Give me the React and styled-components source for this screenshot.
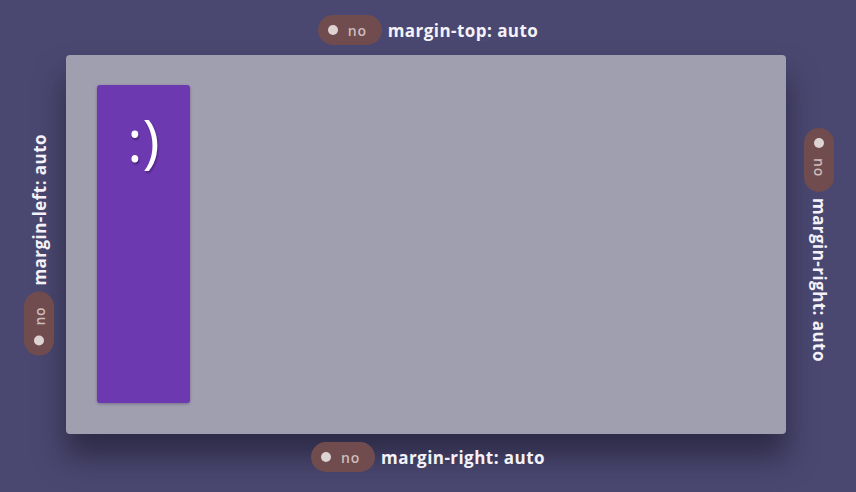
import React from "react";
import styled, { createGlobalStyle } from "styled-components";

const Global = createGlobalStyle`
  html, body { margin: 0; padding: 0; }
  body {
    background: #4a4870;
    font-family: "Open Sans", "Noto Sans", sans-serif;
    width: 856px;
    height: 492px;
    overflow: hidden;
  }
`;

const Stage = styled.div`
  display: grid;
  grid-template-columns: 66px 720px 70px;
  grid-template-rows: 55px 379px 58px;
  width: 856px;
  height: 492px;
`;

const Cell = styled.div`
  grid-column: ${(p) => p.$col};
  grid-row: ${(p) => p.$row};
  display: flex;
  align-items: ${(p) => p.$align || "center"};
  justify-content: ${(p) => p.$justify || "center"};
  padding: ${(p) => p.$pad || "0"};
  box-sizing: border-box;
`;

const Control = styled.label`
  display: flex;
  align-items: center;
  gap: 6px;
  writing-mode: ${(p) => (p.$vertical ? "vertical-rl" : "horizontal-tb")};
  transform: ${(p) => (p.$flip ? "rotate(180deg)" : "none")};
  color: #f4f2f8;
  font-weight: 700;
  font-size: 17px;
  letter-spacing: 0.45px;
  white-space: nowrap;
`;

const Pill = styled.span`
  display: flex;
  align-items: center;
  box-sizing: border-box;
  width: 30px;
  height: 64px;
  ${(p) => (p.$vertical ? "" : "width: 64px; height: 30px;")}
  padding: ${(p) => (p.$vertical ? "10px 0" : "0 10px")};
  gap: 10px;
  border-radius: 15px;
  background: #704c4e;
  color: #cdbcbc;
  font-weight: 600;
  font-size: 14px;
  letter-spacing: 0.8px;
`;

const Dot = styled.span`
  width: 10px;
  height: 10px;
  border-radius: 50%;
  background: #ddd3d3;
  flex: none;
`;

const Card = styled.div`
  grid-column: 2;
  grid-row: 2;
  background: #a09fb0;
  border-radius: 4px;
  box-shadow: 0 22px 30px rgba(20, 18, 35, 0.55);
  padding: 30px 31px;
  box-sizing: border-box;
  display: flex;
`;

const Item = styled.div`
  width: 93px;
  height: 318px;
  background: #6d39b0;
  border-radius: 3px;
  box-shadow: 0 1px 3px rgba(40, 20, 80, 0.35);
  display: flex;
  justify-content: center;
  color: #ffffff;
  font-size: 58px;
  font-weight: 400;
  padding-top: 26px;
  box-sizing: border-box;
  text-shadow: 1px 2px 2px rgba(40, 10, 70, 0.45);
  line-height: 1;
`;

function Toggle({ label, vertical, flip }) {
  return (
    <Control $vertical={vertical} $flip={flip}>
      <Pill $vertical={vertical}>
        <Dot />
        <span>no</span>
      </Pill>
      <span>{label}</span>
    </Control>
  );
}

export default function App() {
  return (
    <>
      <Global />
      <Stage>
        <Cell $col="1 / 4" $row="1" $align="flex-start" $pad="15px 0 0">
          <Toggle label="margin-top: auto" />
        </Cell>
        <Cell $col="1" $row="2" $justify="flex-end" $pad="0 12px 0 0">
          <Toggle label="margin-left: auto" vertical flip />
        </Cell>
        <Card>
          <Item>:)</Item>
        </Card>
        <Cell $col="3" $row="2" $justify="flex-start" $pad="0 0 0 18px">
          <Toggle label="margin-right: auto" vertical />
        </Cell>
        <Cell $col="1 / 4" $row="3" $align="flex-start" $pad="8px 0 0">
          <Toggle label="margin-right: auto" />
        </Cell>
      </Stage>
    </>
  );
}
